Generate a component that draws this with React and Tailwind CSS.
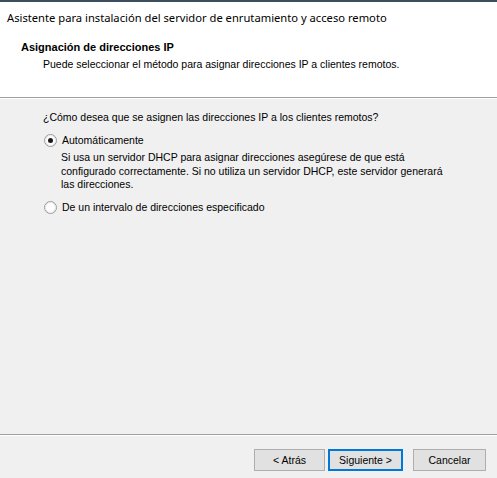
import React from "react";

function Radio({ checked }) {
  return (
    <svg width="13" height="13" viewBox="0 0 13 13" className="shrink-0">
      <circle cx="6.5" cy="6.5" r="6" fill="#ffffff" stroke="#9a9a9a" strokeWidth="1" />
      <circle cx="6.5" cy="6.5" r="5" fill="none" stroke="#e3e3e3" strokeWidth="1" />
      {checked && <circle cx="6.5" cy="6.5" r="2.5" fill="#1a1a1a" />}
    </svg>
  );
}

export default function App() {
  const f = { fontFamily: "Tahoma, 'Liberation Sans', Arial, sans-serif" };
  return (
    <div className="w-[497px] h-[478px] bg-[#f0f0f0] flex flex-col text-[10.5px] text-black overflow-hidden" style={f}>
      <div className="h-[2px] bg-[#3c4d60]" />
      <div className="bg-white h-[95px] flex flex-col">
        <div className="pl-[7px] pt-[8px] text-[11.2px] leading-[15px] font-['Noto_Sans',sans-serif]">
          Asistente para instalación del servidor de enrutamiento y acceso remoto
        </div>
        <div className="pl-[21px] pt-[16px] font-bold text-[11px] leading-[13px]">Asignación de direcciones IP</div>
        <div className="pl-[43px] pt-[4px] leading-[13px]">
          Puede seleccionar el método para asignar direcciones IP a clientes remotos.
        </div>
      </div>
      <div className="h-px bg-[#a0a0a0]" />
      <div className="h-px bg-white" />
      <div className="flex-1 flex flex-col pl-[43px] pt-[12px]">
        <div className="leading-[13px]">¿Cómo desea que se asignen las direcciones IP a los clientes remotos?</div>
        <div className="flex items-center gap-[5px] mt-[10px] pl-px">
          <Radio checked />
          <span className="leading-[13px]">Automáticamente</span>
        </div>
        <div className="pl-[18px] mt-[4px] leading-[13.5px] whitespace-nowrap">
          Si usa un servidor DHCP para asignar direcciones asegúrese de que está
          <br />
          configurado correctamente. Si no utiliza un servidor DHCP, este servidor generará
          <br />
          las direcciones.
        </div>
        <div className="flex items-center gap-[5px] mt-[9px] pl-px">
          <Radio />
          <span className="leading-[13px]">De un intervalo de direcciones especificado</span>
        </div>
      </div>
      <div className="h-px bg-[#a0a0a0]" />
      <div className="h-px bg-white" />
      <div className="h-[42px] flex items-start justify-end pt-[13px] pr-[11px]">
        <button className="w-[71px] h-[22px] bg-[#e1e1e1] border border-[#adadad] leading-[20px] text-[10.5px]" style={f}>&lt; Atrás</button>
        <button className="w-[75px] h-[22px] ml-[3px] bg-[#e1e1e1] border-2 border-[#0078d7] leading-[18px] text-[10.5px]" style={f}>Siguiente &gt;</button>
        <button className="w-[73px] h-[22px] ml-[10px] bg-[#e1e1e1] border border-[#adadad] leading-[20px] text-[10.5px]" style={f}>Cancelar</button>
      </div>
    </div>
  );
}
